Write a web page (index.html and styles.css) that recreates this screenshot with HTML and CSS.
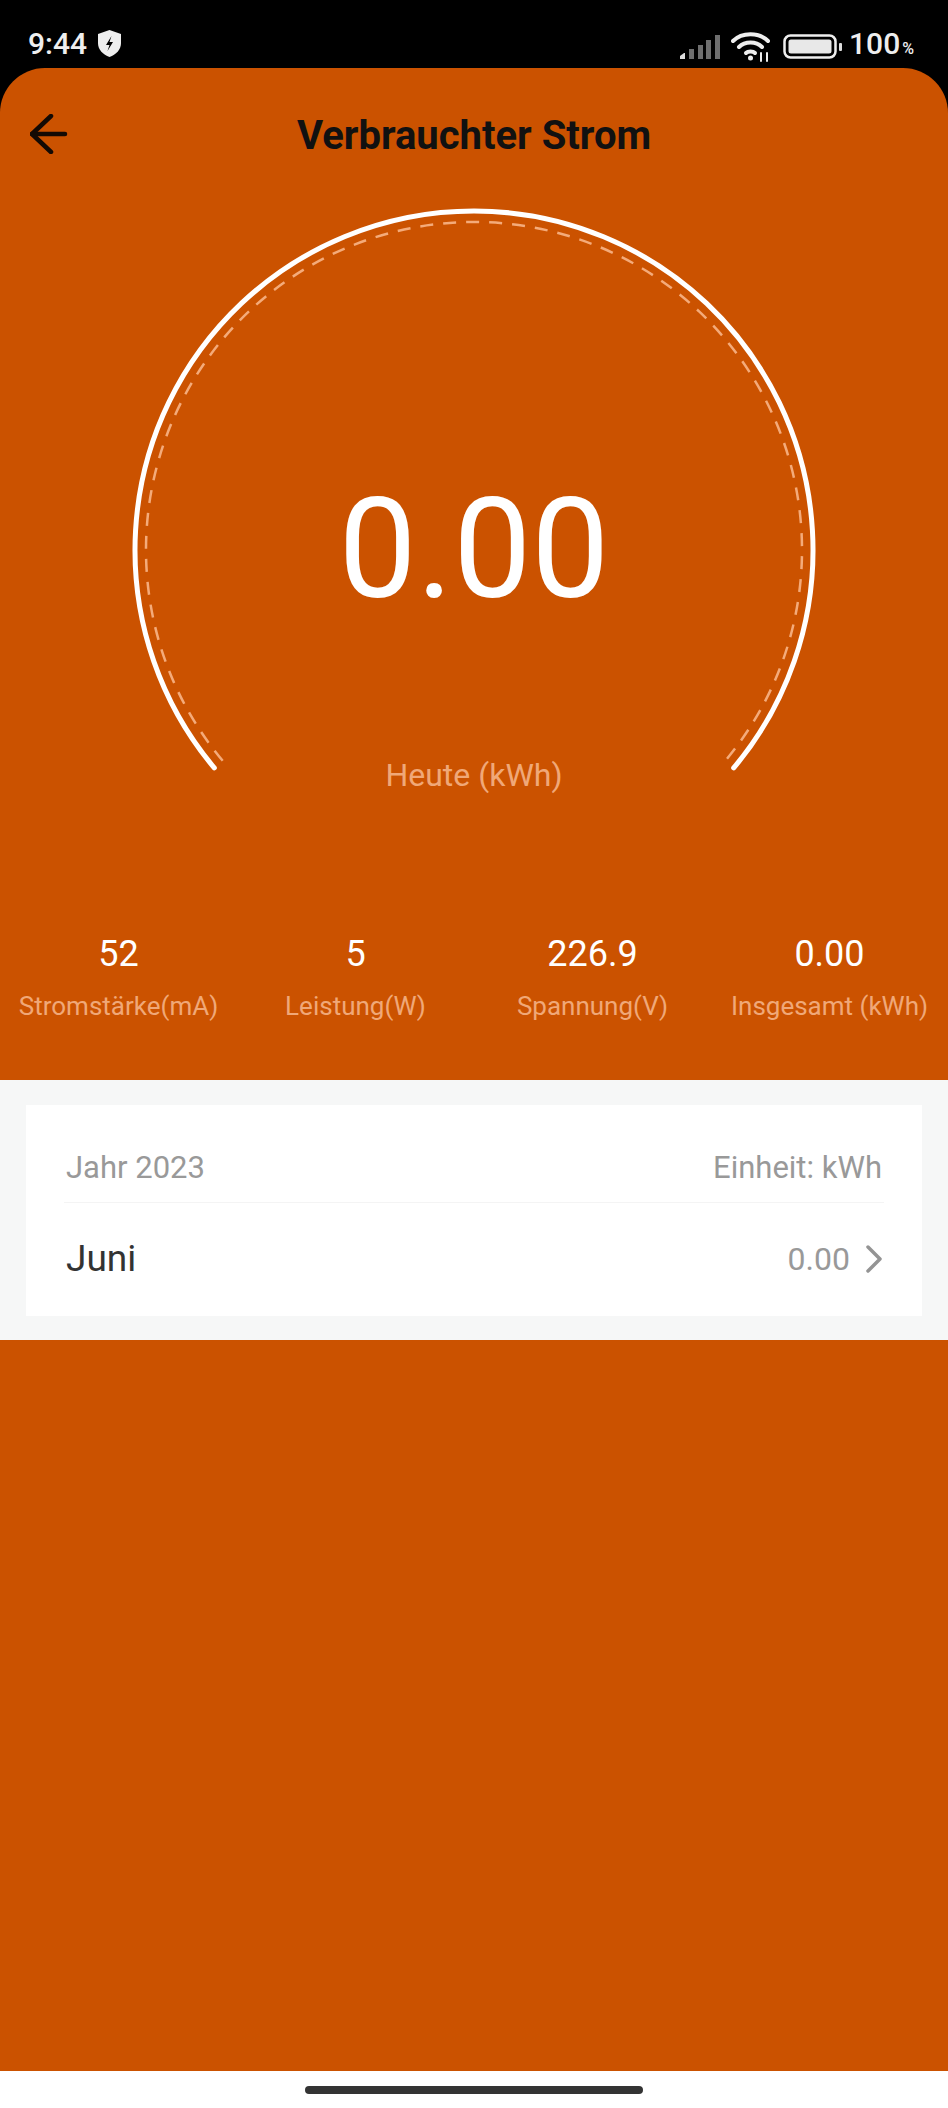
FILE: index.html
```
<!DOCTYPE html>
<html lang="de">
<head>
<meta charset="utf-8">
<title>Verbrauchter Strom</title>
<link rel="stylesheet" href="styles.css">
</head>
<body>
<div class="phone">
  <header class="status">
    <div class="status-left">
      <span class="time">9:44</span>
      <svg class="shield" width="23" height="27" viewBox="0 0 23 27"><path d="M11.5 0 L23 4 V13 C23 20 18 24.500 11.500 27 C5 24.500 0 20 0 13 V4 Z" fill="#eee"/><path d="M13.500 6 L8 15 H11.500 L9.500 21 L15 12 H11.500 Z" fill="#000"/></svg>
    </div>
    <div class="status-right">
      <svg class="signal" width="40" height="26" viewBox="0 0 40 26">
        <path d="M0 25 V22 L4 19 H5 V25 Z" fill="#ddd"/>
        <rect x="9" y="15" width="5" height="10" fill="#6e6e6e"/>
        <rect x="18" y="11" width="5" height="14" fill="#6e6e6e"/>
        <rect x="26" y="6" width="5" height="19" fill="#6e6e6e"/>
        <rect x="35" y="1" width="5" height="24" fill="#6e6e6e"/>
      </svg>
      <svg class="wifi" width="40" height="30" viewBox="0 0 40 30" fill="none" stroke="#eee" stroke-width="4" stroke-linecap="round">
        <path d="M2 9 C11 0 28 0 37 9"/>
        <path d="M8 15 C14 9 25 9 31 15"/>
        <path d="M15 21 C17 19 22 19 24 21" />
        <circle cx="19.500" cy="26" r="2.500" fill="#eee" stroke="none"/>
        <path d="M30 21 V29 M36 21 V29" stroke-width="2"/>
      </svg>
      <svg class="battery" width="60" height="26" viewBox="0 0 60 26">
        <rect x="1.500" y="1.500" width="51" height="22" rx="6" fill="none" stroke="#eee" stroke-width="2.500"/>
        <rect x="5.500" y="5.500" width="43" height="14" rx="2.500" fill="#e8e8e8"/>
        <rect x="56" y="9" width="3" height="8" rx="1" fill="#ddd"/>
      </svg>
      <span class="pct">100<small class="pct-sign">%</small></span>
    </div>
  </header>

  <main class="screen">
    <nav class="nav">
      <svg class="back" width="38" height="40" viewBox="0 0 38 40" fill="none" stroke="#140a04" stroke-width="4.500" stroke-linecap="round" stroke-linejoin="round">
        <path d="M21 2 L2 20 L21 38"/><path d="M2 20 H35"/>
      </svg>
      <h1 class="title">Verbrauchter Strom</h1>
    </nav>

    <section class="gauge">
      <svg class="gauge-arc" width="948" height="600" viewBox="0 0 948 600" fill="none" stroke-linecap="round">
        <path d="M214.300 567.900 A339 339 0 1 1 733.700 567.900" stroke="#fff" stroke-width="5"/>
        <path d="M222.700 560.800 A328 328 0 1 1 725.300 560.800" stroke="#f4ab7a" stroke-width="2.500" stroke-dasharray="13 10" stroke-linecap="butt"/>
      </svg>
      <div class="gauge-value">0.00</div>
      <div class="gauge-label">Heute (kWh)</div>
    </section>

    <section class="stats">
      <div class="stat"><div class="stat-value">52</div><div class="stat-label">Stromstärke(mA)</div></div>
      <div class="stat"><div class="stat-value">5</div><div class="stat-label">Leistung(W)</div></div>
      <div class="stat"><div class="stat-value">226.9</div><div class="stat-label">Spannung(V)</div></div>
      <div class="stat"><div class="stat-value">0.00</div><div class="stat-label">Insgesamt (kWh)</div></div>
    </section>

    <section class="band">
      <div class="card">
        <div class="card-head"><span>Jahr 2023</span><span>Einheit: kWh</span></div>
        <div class="card-row">
          <span class="month">Juni</span>
          <span class="row-end">
            <span class="row-value">0.00</span>
            <svg class="chev" width="16" height="28" viewBox="0 0 16 28" fill="none" stroke="#949494" stroke-width="3.500" stroke-linecap="round" stroke-linejoin="round"><path d="M2 2 L14 14 L2 26"/></svg>
          </span>
        </div>
      </div>
    </section>
  </main>

  <footer class="home"><div class="home-bar"></div></footer>
</div>
</body>
</html>
```
FILE: styles.css
```
* { box-sizing: border-box; }
html, body { margin: 0; padding: 0; }
body { font-family: Roboto, "Liberation Sans", sans-serif; background: #000; }
.phone { width: 948px; height: 2108px; display: flex; flex-direction: column; background: #000; overflow: hidden; }

.status { height: 68px; flex: none; display: flex; justify-content: space-between; align-items: flex-start; padding: 27px 34px 0 28px; color: #eee; }
.status-left { display: flex; align-items: center; gap: 11px; }
.time { font-size: 30px; line-height: 34px; font-weight: 500; }
.shield { display: block; margin-top: -2px; }
.status-right { display: flex; align-items: center; }
.signal { display: block; margin-right: 11px; }
.wifi { display: block; margin-right: 12px; }
.battery { display: block; margin-right: 6px; }
.pct { font-size: 30px; line-height: 34px; font-weight: 500; }
.pct-sign { font-size: 16px; margin-left: 2px; }

.screen { flex: 1; display: flex; flex-direction: column; background: #cb5200; border-radius: 45px 45px 0 0; }

.nav { height: 132px; flex: none; display: flex; align-items: center; justify-content: center; position: relative; padding-top: 4px; }
.back { position: absolute; left: 30px; top: 46px; }
.title { margin: 0; font-size: 40px; line-height: 44px; font-weight: 700; color: #111; }

.gauge { display: grid; height: 600px; flex: none; justify-items: center; }
.gauge-arc { grid-area: 1 / 1; display: block; }
.gauge-value { grid-area: 1 / 1; margin-top: 270px; font-size: 139px; line-height: 160px; color: #fff; }
.gauge-label { grid-area: 1 / 1; margin-top: 557px; font-size: 32px; line-height: 36px; color: #f0a878; }

.stats { flex: none; height: 280px; display: grid; grid-template-columns: repeat(4, 237px); justify-items: center; align-content: start; }
.stat { text-align: center; padding-top: 135px; }
.stat-value { font-size: 36px; line-height: 38px; color: #fff; }
.stat-label { margin-top: 19px; font-size: 26px; line-height: 28px; color: #f0a878; white-space: nowrap; }

.band { flex: none; height: 260px; background: #f6f7f7; padding: 25px 26px 24px; }
.card { background: #fff; height: 211px; padding: 0 38px; }
.card-head { height: 98px; display: flex; justify-content: space-between; align-items: flex-end; padding: 0 2px 14px; border-bottom: 1px solid #f4f4f4; font-size: 31px; line-height: 40px; color: #999; }
.card-row { height: 113px; display: flex; justify-content: space-between; align-items: center; padding: 0 2px 2px; }
.month { font-size: 37px; color: #333; }
.row-end { display: flex; align-items: center; gap: 16px; }
.row-value { font-size: 32px; color: #999; }
.chev { display: block; }

.home { height: 37px; flex: none; background: #fff; display: flex; justify-content: center; padding-top: 15px; }
.home-bar { width: 338px; height: 8px; border-radius: 4px; background: #333; }
```
